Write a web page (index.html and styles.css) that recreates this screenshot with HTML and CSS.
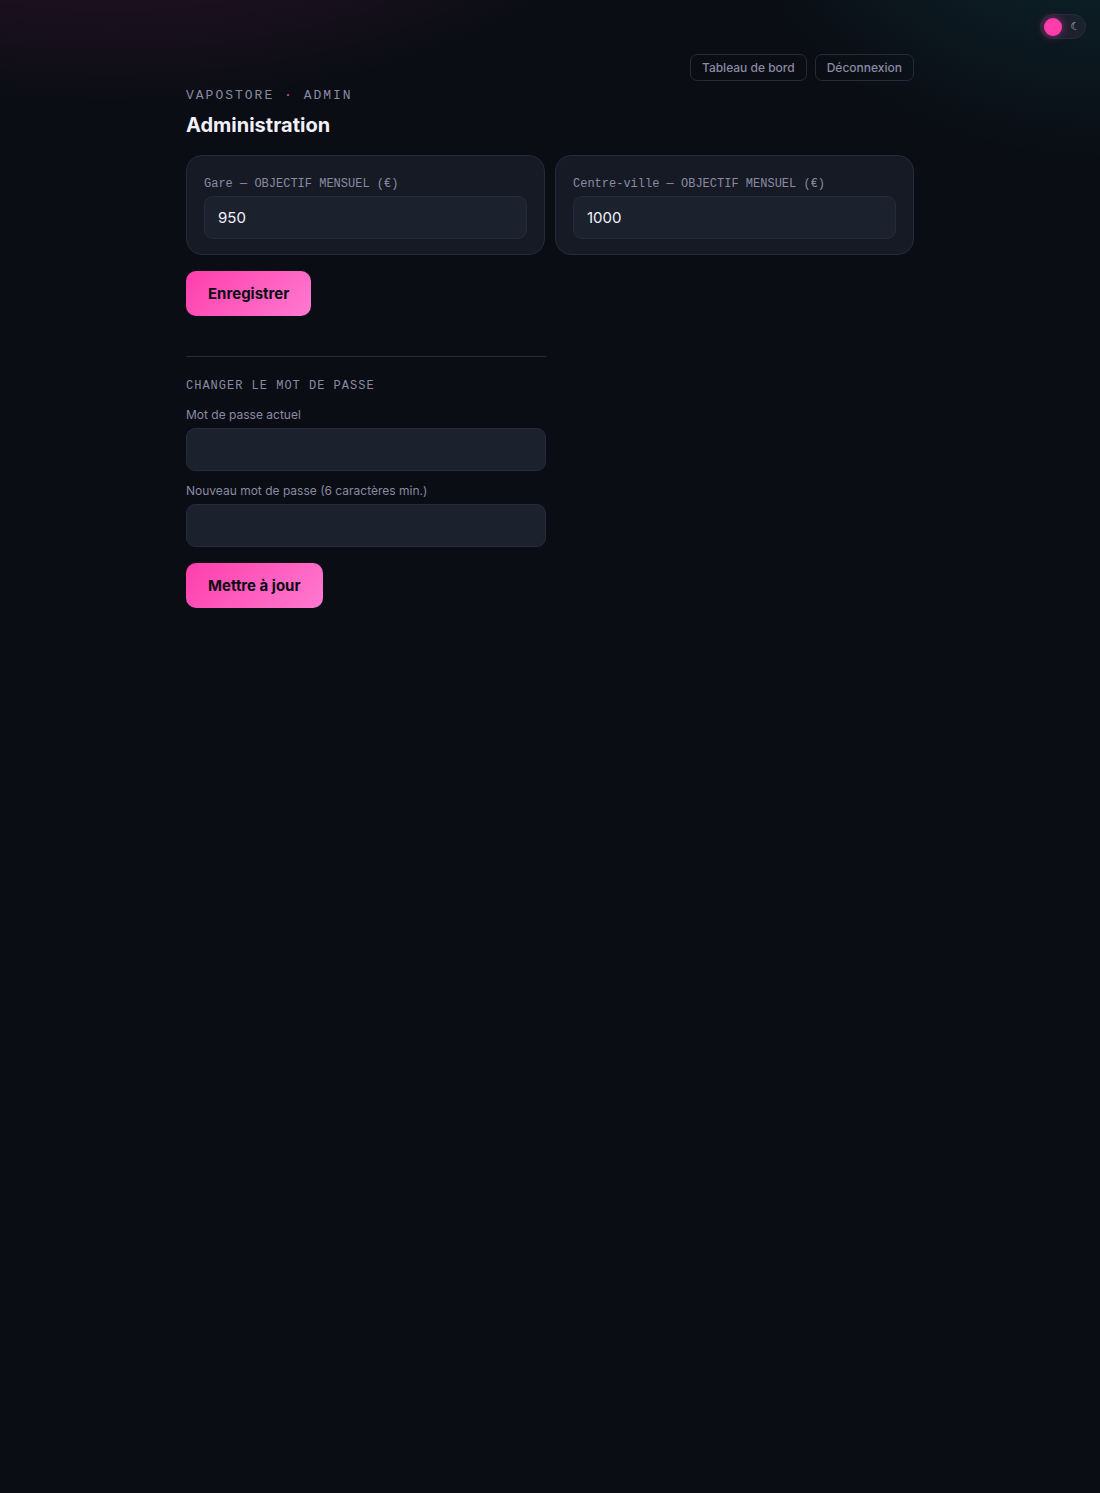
FILE: index.html
```html
<!DOCTYPE html>
<html lang="fr">

<head>
    <meta charset="UTF-8">
    <meta name="viewport" content="width=device-width, initial-scale=1.0">
    <title>Administration</title>

    <link rel="stylesheet" href="styles.css">
</head>

<body>

    <button type="button" class="theme-toggle" id="theme-toggle" aria-label="Changer de thème">
        <span class="knob"></span>
        <span class="moon">☾</span>
    </button>

    <main class="wrap">
        <nav class="topbar">
            <a class="link-btn" href="#">Tableau de bord</a>
            <a class="link-btn" href="#">Déconnexion</a>
        </nav>

        <header>
            <div class="brand">VAPOSTORE <span class="dot">·</span> ADMIN</div>
            <h1>Administration</h1>
        </header>

        <form>
            <div class="cards">
                <div class="card">
                    <label class="mono" for="gare">Gare — OBJECTIF MENSUEL (€)</label>
                    <input type="number" id="gare" value="950">
                </div>
                <div class="card">
                    <label class="mono" for="centre">Centre-ville — OBJECTIF MENSUEL (€)</label>
                    <input type="number" id="centre" value="1000">
                </div>
            </div>
            <button type="submit" class="btn">Enregistrer</button>
        </form>

        <form class="password">
            <h2>CHANGER LE MOT DE PASSE</h2>
            <label for="current">Mot de passe actuel</label>
            <input type="password" id="current">
            <label for="new">Nouveau mot de passe (6 caractères min.)</label>
            <input type="password" id="new">
            <button type="submit" class="btn">Mettre à jour</button>
        </form>
    </main>

</body>

</html>
```

FILE: styles.css
```css
:root {
    --bg: #0a0d14;
    --card: #161a25;
    --field: #1c212e;
    --line: #262a3b;
    --text: #f2f0fa;
    --muted: #8a8aa3;
    --pink: #ff3eab;
    --mono: "Liberation Mono", monospace;
}
* {
    box-sizing: border-box;
}
body {
    margin: 0;
    min-height: 100vh;
    color: var(--text);
    font-family: Inter, sans-serif;
    background:
        radial-gradient(560px 260px at 10% -150px, rgba(255, 62, 171, 0.17), transparent),
        radial-gradient(380px 310px at 100% -150px, rgba(40, 210, 220, 0.16), transparent),
        var(--bg);
}

/* theme switch */
.theme-toggle {
    position: fixed;
    top: 14px;
    right: 14px;
    display: flex;
    align-items: center;
    justify-content: space-between;
    width: 46px;
    height: 25px;
    padding: 0 5px 0 3px;
    border: 1px solid var(--line);
    border-radius: 20px;
    background: var(--field);
    cursor: pointer;
}
.knob {
    width: 18px;
    height: 18px;
    border-radius: 50%;
    background: var(--pink);
    box-shadow: 0 0 8px rgba(255, 62, 171, 0.5);
}
.moon {
    color: #b4b8cc;
    font-family: "DejaVu Sans", sans-serif;
    font-size: 11px;
    font-weight: 700;
    line-height: 1;
}

.wrap {
    max-width: 760px;
    margin: 0 auto;
    padding: 54px 16px;
}
.topbar {
    display: flex;
    justify-content: flex-end;
    gap: 8px;
}
.link-btn {
    padding: 5px 11px;
    border: 1px solid var(--line);
    border-radius: 7px;
    color: var(--muted);
    font-size: 12px;
    font-weight: 500;
    line-height: 15px;
    text-decoration: none;
}
.brand {
    margin-top: 5px;
    color: var(--muted);
    font-family: var(--mono);
    font-size: 13px;
    line-height: 20px;
    letter-spacing: 2px;
}
.dot {
    color: var(--pink);
}
h1 {
    margin: 7px 0 18px;
    font-size: 20px;
    font-weight: 700;
    line-height: 24px;
}

.cards {
    display: grid;
    grid-template-columns: 1fr 1fr;
    gap: 10px;
    margin-bottom: 16px;
}
.card {
    padding: 20px 17px 15px;
    border: 1px solid var(--line);
    border-radius: 16px;
    background: var(--card);
}
label {
    display: block;
    margin-bottom: 5px;
    color: var(--muted);
    font-size: 12px;
    line-height: 16px;
}
.mono {
    margin-bottom: 4px;
    font-family: var(--mono);
}
input {
    display: block;
    width: 100%;
    height: 43px;
    padding: 0 13px;
    border: 1px solid var(--line);
    border-radius: 9px;
    background: var(--field);
    color: var(--text);
    font-family: inherit;
    font-size: 15px;
    appearance: textfield;
}
input::-webkit-inner-spin-button {
    display: none;
}
.btn {
    display: block;
    height: 45px;
    padding: 0 22px;
    border: 0;
    border-radius: 10px;
    background: linear-gradient(135deg, var(--pink), #ff7ad1);
    color: var(--bg);
    font-family: inherit;
    font-size: 15px;
    font-weight: 700;
    cursor: pointer;
}

.password {
    max-width: 360px;
    margin-top: 40px;
    padding-top: 21px;
    border-top: 1px solid var(--line);
}
.password h2 {
    margin: 0 0 13px;
    color: var(--muted);
    font-family: var(--mono);
    font-size: 12px;
    font-weight: 400;
    line-height: 16px;
    letter-spacing: 1px;
}
.password input {
    margin-bottom: 12px;
}
.password .btn {
    margin-top: 16px;
}
```
